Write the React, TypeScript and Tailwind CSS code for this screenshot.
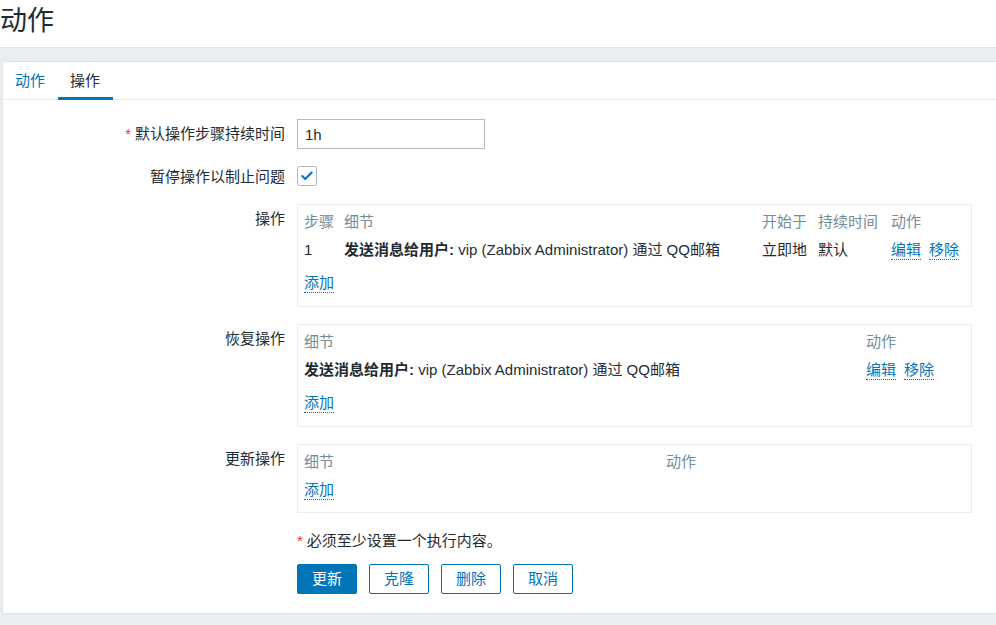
import { Check } from "lucide-react";

const font = { fontFamily: '"Liberation Sans", "Noto Sans CJK SC", sans-serif' };

function Link({ children }: { children: string }) {
  return (
    <a className="inline-block h-[20px] leading-[19px] text-[#0275b8] border-b border-dotted border-[#0275b8]">
      {children}
    </a>
  );
}

function Label({ children, required }: { children: string; required?: boolean }) {
  return (
    <div className="w-[285px] shrink-0 text-right text-[#1f2c33]">
      {required && <span className="text-[#e33734] mr-[4px]">*</span>}
      {children}
    </div>
  );
}

function Box({ children, height }: { children: React.ReactNode; height: string }) {
  return (
    <div className={`ml-[12px] w-[675px] border border-[#ebeef0] px-[6px] ${height}`}>{children}</div>
  );
}

function Message() {
  return (
    <>
      <b className="font-bold">发送消息给用户:</b> vip (Zabbix Administrator) 通过 QQ邮箱
    </>
  );
}

function Btn({ children, primary }: { children: string; primary?: boolean }) {
  return (
    <button
      className={`w-[60px] h-[30px] rounded-[2px] border border-[#0275b8] ${
        primary ? "bg-[#0275b8] text-white" : "bg-white text-[#0275b8]"
      }`}
    >
      {children}
    </button>
  );
}

export default function App() {
  return (
    <div style={font} className="h-[625px] w-[996px] overflow-hidden bg-[#ebeef0] text-[15px] text-[#1f2c33]">
      <header className="h-[48px] bg-white border-b border-[#dfe4e7]">
        <h1 className="text-[27px] leading-[42px] text-[#1f2c33]">动作</h1>
      </header>
      <main className="mt-[13px] ml-[2px] h-[553px] bg-white border-t border-l border-b border-[#dfe4e7]">
        <nav className="flex h-[38px] border-b border-[#ebeef0]">
          <a className="w-[55px] pl-[12px] pt-[9px] leading-[20px] text-[#0275b8]">动作</a>
          <a className="w-[55px] pl-[12px] pt-[9px] leading-[20px] border-b-[3px] border-[#0275b8] h-[38px]">操作</a>
        </nav>
        <form className="ml-[-3px] pt-[19px]">
          <div className="flex items-center h-[30px]">
            <Label required>默认操作步骤持续时间</Label>
            <input
              readOnly
              value="1h"
              className="ml-[12px] w-[188px] h-[30px] border border-[#acbbc4] px-[7px] text-[#1f2c33] outline-none"
            />
          </div>
          <div className="flex items-center h-[20px] mt-[17px]">
            <div className="pt-[2px]"><Label>暂停操作以制止问题</Label></div>
            <span className="ml-[12px] w-[20px] h-[20px] flex items-center justify-center rounded-[2px] border border-[#acbbc4]">
              <Check className="w-[14px] h-[14px] text-[#0275b8]" strokeWidth={3.5} />
            </span>
          </div>

          <div className="flex mt-[18px]">
            <div className="pt-[4px]"><Label>操作</Label></div>
            <Box height="h-[103px]">
              <div className="flex h-[34px] items-center text-[#768d99]">
                <span className="w-[40px]">步骤</span>
                <span className="w-[418px]">细节</span>
                <span className="w-[56px]">开始于</span>
                <span className="w-[73px]">持续时间</span>
                <span>动作</span>
              </div>
              <div className="flex h-[22px] items-center">
                <span className="w-[40px]">1</span>
                <span className="w-[418px] whitespace-nowrap"><Message /></span>
                <span className="w-[56px]">立即地</span>
                <span className="w-[73px]">默认</span>
                <span className="flex gap-[8px]"><Link>编辑</Link><Link>移除</Link></span>
              </div>
              <div className="mt-[11px]"><Link>添加</Link></div>
            </Box>
          </div>

          <div className="flex mt-[17px]">
            <div className="pt-[4px]"><Label>恢复操作</Label></div>
            <Box height="h-[103px]">
              <div className="flex h-[34px] items-center text-[#768d99]">
                <span className="w-[562px]">细节</span>
                <span>动作</span>
              </div>
              <div className="flex h-[22px] items-center">
                <span className="w-[562px] whitespace-nowrap"><Message /></span>
                <span className="flex gap-[8px]"><Link>编辑</Link><Link>移除</Link></span>
              </div>
              <div className="mt-[11px]"><Link>添加</Link></div>
            </Box>
          </div>

          <div className="flex mt-[17px]">
            <div className="pt-[4px]"><Label>更新操作</Label></div>
            <Box height="h-[69px]">
              <div className="flex h-[34px] items-center text-[#768d99]">
                <span className="w-[362px]">细节</span>
                <span>动作</span>
              </div>
              <Link>添加</Link>
            </Box>
          </div>

          <p className="ml-[297px] mt-[18px] leading-[20px]">
            <span className="text-[#e33734] mr-[4px]">*</span>必须至少设置一个执行内容。
          </p>
          <div className="ml-[297px] mt-[13px] flex gap-[12px]">
            <Btn primary>更新</Btn>
            <Btn>克隆</Btn>
            <Btn>删除</Btn>
            <Btn>取消</Btn>
          </div>
        </form>
      </main>
    </div>
  );
}
